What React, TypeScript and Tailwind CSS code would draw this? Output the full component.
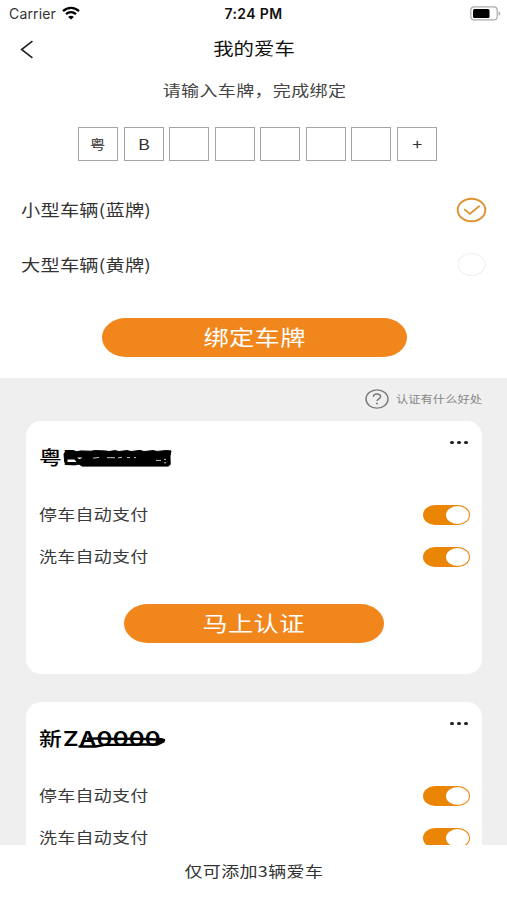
import { useState } from 'react';
import clsx from 'clsx';

const PLATE_SLOTS = ['粤', 'B', '', '', '', '', '', '+'];

const SIZES = ['小型车辆(蓝牌)', '大型车辆(黄牌)'];

function StatusBar() {
  return (
    <div className="relative h-7 flex items-center justify-between pl-[9px] pr-[6px] font-['Inter']">
      <div className="flex items-center relative -top-px">
        <span className="text-[14px] tracking-[0.15px] text-[#333]">Carrier</span>
        <svg className="ml-[6px] w-[18px] h-[14px]" viewBox="0 0 18 14" fill="none" stroke="#000" strokeWidth="2.3">
          <path d="M1 5.2C5.6 .8 12.4 .8 17 5.2" />
          <path d="M4 8.2c3-2.7 7-2.7 10 0" />
          <path d="M9 13.6 6.1 10.9c1.7-1.4 4.1-1.4 5.8 0z" fill="#000" stroke="none" />
        </svg>
      </div>
      <span className="absolute left-0 right-0 top-[3px] text-center text-[14px] font-semibold tracking-[0.4px] text-[#111]">7:24 PM</span>
      <svg className="relative -top-px w-[31px] h-[15px]" viewBox="0 0 31 15">
        <rect x=".8" y=".9" width="26.4" height="13" rx="3.5" fill="#fff" stroke="#aaa" strokeWidth="1.2" />
        <rect x="3" y="3" width="16.5" height="9" rx="1.5" fill="#000" />
        <path d="M28.6 5.2c2.2 1 2.2 3.6 0 4.6z" fill="#aaa" />
      </svg>
    </div>
  );
}

function Toggle() {
  const [on, setOn] = useState(true);
  return (
    <button
      onClick={() => setOn(!on)}
      className={clsx(
        'w-[47px] h-5 flex items-center rounded-[12px/10px] p-px',
        on ? 'justify-end bg-[#eb8505]' : 'justify-start bg-[#ddd]',
      )}
    >
      <span className="w-[23px] h-[18px] rounded-[50%] bg-white" />
    </button>
  );
}

function PayRow({ label }: { label: string }) {
  return (
    <div className="h-[42px] flex items-center justify-between">
      <span className="relative -top-px text-[15px] tracking-[0.2px] text-[#3a3a3a] scale-x-[1.2] origin-left">{label}</span>
      <Toggle />
    </div>
  );
}

type CarCardProps = {
  region: string;
  number: string;
  action?: string;
  children: React.ReactNode;
};

function CarCard({ region, number, action, children }: CarCardProps) {
  return (
    <div className="h-[253px] shrink-0 bg-white rounded-[15px] pl-[13px] pr-[12px]">
      <div className="relative h-[73px]">
        <div className="absolute left-0 top-[20px] h-8 flex items-center text-[19px] leading-8 font-medium text-black scale-x-[1.2] origin-left whitespace-nowrap">
          <span>{region}</span>
          <span className="relative top-px ml-px font-['Inter'] text-[20px] font-semibold tracking-[0.2px]">{number}</span>
        </div>
        {children}
        <div className="absolute right-[2px] top-[20px] flex gap-[3px]">
          <i className="w-[4px] h-[3px] rounded-full bg-[#222]" />
          <i className="w-[4px] h-[3px] rounded-full bg-[#222]" />
          <i className="w-[4px] h-[3px] rounded-full bg-[#222]" />
        </div>
      </div>
      <PayRow label="停车自动支付" />
      <PayRow label="洗车自动支付" />
      {action && (
        <button className="mt-[26px] ml-[85px] w-[260px] h-[39px] flex items-center justify-center rounded-[24px/19.5px] bg-[#f0861c] text-white">
          <span className="relative -top-px text-[21px] tracking-[0.3px] scale-x-[1.2]">{action}</span>
        </button>
      )}
    </div>
  );
}

export default function App() {
  const [size, setSize] = useState(0);

  return (
    <div className="w-[507px] h-[900px] flex flex-col overflow-hidden bg-white font-['Noto_Sans_CJK_SC',sans-serif]">
      <StatusBar />

      {/* Nav */}
      <div className="relative h-[44px] flex items-center justify-center">
        <svg className="absolute left-[20px] top-[12px] w-[14px] h-[19px]" viewBox="0 0 14 19" fill="none" stroke="#222" strokeWidth="1.6">
          <path d="M12.4 1.2 1.6 9.5l10.8 8.3" />
        </svg>
        <h1 className="text-[17px] text-[#111] scale-x-[1.2] relative -top-[2px]">我的爱车</h1>
      </div>

      {/* Plate input */}
      <div className="h-[37px] flex items-center justify-center">
        <p className="ml-[2px] text-[15px] tracking-[0.3px] text-[#444] scale-x-[1.2] whitespace-nowrap">请输入车牌，完成绑定</p>
      </div>
      <div className="mt-[18px] ml-[78px] mr-[70px] h-[34px] flex justify-between">
        {PLATE_SLOTS.map((c, i) => (
          <div key={i} className="w-[40px] h-[34px] border-[1.5px] border-[#a5a5a5] flex items-center justify-center text-[#333]">
            <span className={clsx('scale-x-[1.2]', i === 0 ? 'text-[13px]' : 'text-[15px]')}>{c}</span>
          </div>
        ))}
      </div>

      {/* Vehicle size */}
      <div className="mt-[22px] pl-[21px] pr-[20px]">
        {SIZES.map((label, i) => (
          <div key={label} onClick={() => setSize(i)} className="h-[54.5px] flex items-center justify-between">
            <span className="relative -top-px text-[16px] tracking-[0.2px] text-[#333] scale-x-[1.2] origin-left">{label}</span>
            <svg className="w-[31px] h-[26px]" viewBox="0 0 31 26" fill="none">
              {size === i ? (
                <>
                  <ellipse cx="15.5" cy="13" rx="13.8" ry="11.3" stroke="#dd922e" strokeWidth="1.9" />
                  <path d="m8.7 12.6 5.2 4.3 9.2-7.6" stroke="#dd922e" strokeWidth="1.8" strokeLinecap="round" />
                </>
              ) : (
                <ellipse cx="15.5" cy="12.5" rx="13.6" ry="11" stroke="#f0f0f0" strokeWidth="1.2" />
              )}
            </svg>
          </div>
        ))}
      </div>

      <button className="mt-[26px] ml-[102px] w-[305px] h-[39px] shrink-0 flex items-center justify-center rounded-[24px/19.5px] bg-[#f0861c] text-white">
        <span className="relative -top-px text-[21px] tracking-[0.3px] scale-x-[1.2]">绑定车牌</span>
      </button>

      {/* Bound cars */}
      <div className="mt-[21px] h-[467px] shrink-0 overflow-hidden bg-[#efefef] pl-[26px] pr-[25px] flex flex-col">
        <div className="h-[43px] shrink-0 flex items-center justify-end">
          <svg className="relative -top-px w-[24px] h-[20px] mr-[7px]" viewBox="0 0 24 20" fill="none" stroke="#777">
            <ellipse cx="12" cy="10" rx="11" ry="9.1" strokeWidth="1.4" />
            <path d="M8.4 7.8c0-3.6 7.2-3.6 7.2-.2 0 2.2-3.6 2.2-3.6 4.5" strokeWidth="1.5" />
            <path d="M12 13.7v1.6" strokeWidth="1.8" />
          </svg>
          <span className="relative -top-px w-[86px] text-[10.5px] text-[#888] whitespace-nowrap">
            <span className="inline-block scale-x-[1.17] origin-left">认证有什么好处</span>
          </span>
        </div>
        <CarCard region="粤" number="B" action="马上认证">
          <svg className="absolute left-[24px] top-[28px] w-[110px] h-[18px]" viewBox="0 0 110 18">
            <path
              d="M3 2.4 10 2l3 .8 5-.9 10 .3 4-.6 10 .3 4 .6 6-.9 4 .9 8-.9 4 .9 9-1.1 4 1.1 9-.9 4 .8 9.5-.9 4.5.4-1 5 .2 8.6-2 1.6H19l-3-2-4 .8-9-.4L1.6 12 1 5z"
              fill="#000"
              stroke="#000"
              strokeLinejoin="round"
            />
            <path d="M4.5 10.4h7l2 2.6h-9z" fill="#fff" />
            <path d="M14 8.4h5.5l-2.8 1.9z" fill="#fff" />
            <path d="M30 9.2l6-.8M44 8.7h8M55 8.9l4-.6M64 8.6h3M71 8.6h2M93 11.4h5M101 10.4h2M101 13.8h2" stroke="#ddd" strokeWidth=".9" />
          </svg>
        </CarCard>
        <div className="h-[28px] shrink-0" />
        <CarCard region="新" number="ZA0000">
          <svg className="absolute left-[38px] top-[26px] w-[92px] h-[22px]" viewBox="0 0 92 22" fill="none" stroke="#000" strokeLinecap="round" strokeLinejoin="round">
            <path d="M11 10.8 22 10.4l16 .6 16-.4 16 .4 17 1" strokeWidth="2.4" />
            <path d="M2.5 18.5h16l9-1.6h22l14-.4h17l6-3" strokeWidth="2.4" />
            <path d="M80 10.5h5l3 2-3 2.2h-5z" fill="#000" strokeWidth="1" />
          </svg>
        </CarCard>
      </div>

      <div className="h-[55px] shrink-0 flex items-center justify-center bg-white">
        <span className="ml-px text-[15px] tracking-[0.3px] text-[#333] scale-x-[1.2] relative -top-px">仅可添加3辆爱车</span>
      </div>
    </div>
  );
}
